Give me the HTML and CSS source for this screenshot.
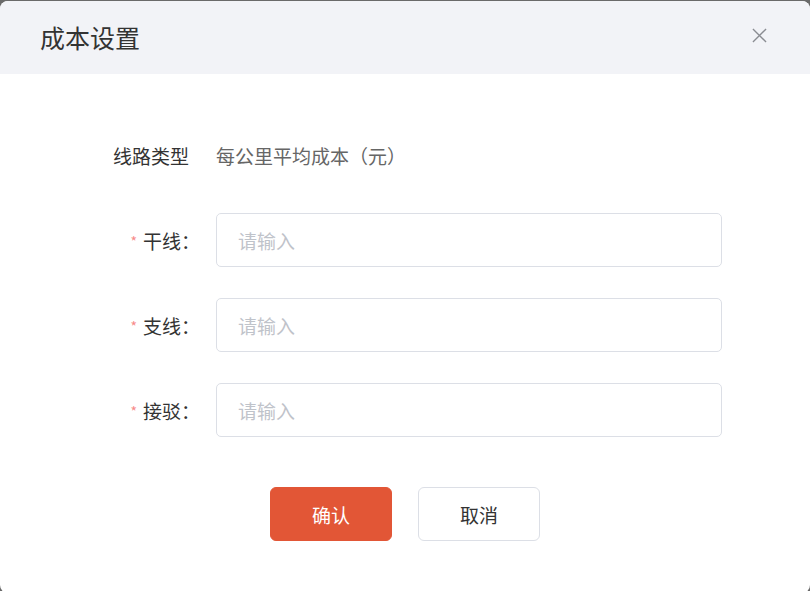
FILE: index.html
```html
<!DOCTYPE html>
<html lang="zh">
<head>
<meta charset="utf-8">
<link rel="stylesheet" href="styles.css">
</head>
<body>
<div class="dialog">
  <div class="header">
    <div class="title">成本设置</div>
    <svg class="close" width="16" height="16" viewBox="0 0 16 16"><path d="M1 1L15 15M15 1L1 15" stroke="#8a8c92" stroke-width="1.4" fill="none"/></svg>
  </div>
  <div class="body">
    <div class="row head-row">
      <div class="label">线路类型</div>
      <div class="sub">每公里平均成本（元）</div>
    </div>
    <div class="row">
      <div class="label"><span class="star">*</span>干线：</div>
      <div class="input">请输入</div>
    </div>
    <div class="row">
      <div class="label"><span class="star">*</span>支线：</div>
      <div class="input">请输入</div>
    </div>
    <div class="row">
      <div class="label"><span class="star">*</span>接驳：</div>
      <div class="input">请输入</div>
    </div>
    <div class="actions">
      <div class="btn primary">确认</div>
      <div class="btn">取消</div>
    </div>
  </div>
</div>
</body>
</html>
```
FILE: styles.css
```css
html, body {
  margin: 0;
  padding: 0;
  height: 100%;
  overflow: hidden;
  background: #6a6a6a;
}
body {
  font-family: "Noto Sans CJK SC", "Noto Sans", sans-serif;
}
.dialog {
  margin-top: 1px;
  height: 592px;
  background: #fff;
  border-radius: 8px;
  overflow: hidden;
}
.header {
  height: 73px;
  background: #f2f3f7;
  display: flex;
  align-items: center;
  justify-content: space-between;
  padding: 0 43px 0 40px;
}
.title {
  font-size: 25px;
  color: #333;
  line-height: 1;
  margin-top: -1px;
}
.close {
  width: 15px;
  height: 15px;
  margin-top: -5px;
}
.body {
  padding-top: 54px;
  display: flex;
  flex-direction: column;
}
.row {
  display: flex;
  align-items: center;
  height: 54px;
  margin-bottom: 31px;
}
.head-row {
  margin-bottom: 31px;
}
.label {
  width: 200px;
  text-align: right;
  font-size: 19px;
  color: #333;
  margin-right: 16px;
  display: flex;
  justify-content: flex-end;
  align-items: center;
}
.head-row .label {
  width: 189px;
  margin-right: 27px;
}
.star {
  color: #f78989;
  font-size: 14px;
  margin-right: 6px;
  margin-top: 2px;
}
.sub {
  font-size: 19px;
  color: #666;
}
.input {
  width: 483px;
  height: 52px;
  border: 1px solid #dcdfe6;
  border-radius: 5px;
  padding-left: 21px;
  display: flex;
  align-items: center;
  font-size: 19px;
  color: #bfc3ca;
}
.actions {
  display: flex;
  justify-content: center;
  gap: 26px;
  margin-top: 19px;
}
.btn {
  width: 120px;
  height: 52px;
  border: 1px solid #dcdfe6;
  border-radius: 6px;
  display: flex;
  align-items: center;
  justify-content: center;
  font-size: 19px;
  color: #333;
  background: #fff;
}
.btn.primary {
  background: #e25636;
  border-color: #e25636;
  color: #fff;
}
```
